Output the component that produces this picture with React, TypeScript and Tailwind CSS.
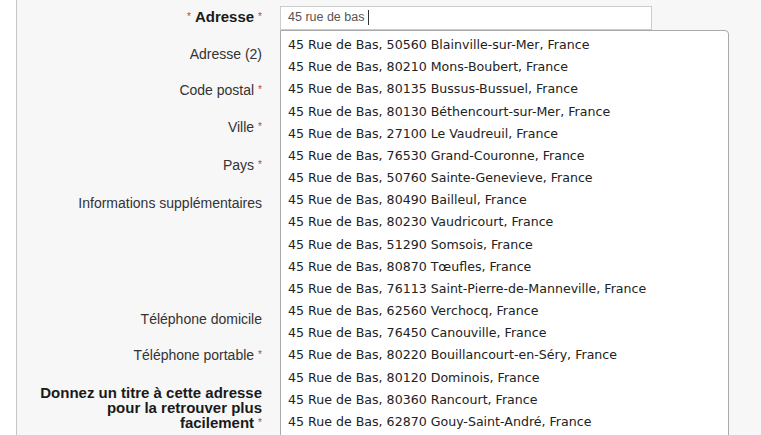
const suggestions = [
  '45 Rue de Bas, 50560 Blainville-sur-Mer, France',
  '45 Rue de Bas, 80210 Mons-Boubert, France',
  '45 Rue de Bas, 80135 Bussus-Bussuel, France',
  '45 Rue de Bas, 80130 Béthencourt-sur-Mer, France',
  '45 Rue de Bas, 27100 Le Vaudreuil, France',
  '45 Rue de Bas, 76530 Grand-Couronne, France',
  '45 Rue de Bas, 50760 Sainte-Genevieve, France',
  '45 Rue de Bas, 80490 Bailleul, France',
  '45 Rue de Bas, 80230 Vaudricourt, France',
  '45 Rue de Bas, 51290 Somsois, France',
  '45 Rue de Bas, 80870 Tœufles, France',
  '45 Rue de Bas, 76113 Saint-Pierre-de-Manneville, France',
  '45 Rue de Bas, 62560 Verchocq, France',
  '45 Rue de Bas, 76450 Canouville, France',
  '45 Rue de Bas, 80220 Bouillancourt-en-Séry, France',
  '45 Rue de Bas, 80120 Dominois, France',
  '45 Rue de Bas, 80360 Rancourt, France',
  '45 Rue de Bas, 62870 Gouy-Saint-André, France',
];

function Star() {
  return <span className="text-[10px] font-normal text-[#b5483f] align-[2px] ml-[4px]">*</span>;
}

type RowProps = {
  label: React.ReactNode;
  required?: boolean;
  h: string;
  top?: boolean;
  pad?: string;
  children?: React.ReactNode;
};

function Row({ label, required, h, top, pad, children }: RowProps) {
  return (
    <div className={`flex ${h} ${top ? 'items-start' : 'items-center'}`}>
      <div className={`w-[230px] ml-[15px] text-right ${pad ?? ''}`}>
        {label}
        {required && <Star />}
      </div>
      <div className="ml-[18px] flex-1">{children}</div>
    </div>
  );
}

export default function App() {
  return (
    <div className="w-[761px] h-[435px] overflow-hidden bg-white flex font-['Liberation_Sans',Arial,sans-serif] text-[14px] text-[#333]">
      <div className="w-[16px] shrink-0 bg-white" />
      <div className="relative flex-1 border-l border-[#c6c6c6] bg-[#f7f7f7]">
        <Row
          h="h-[35px]"
          label={
            <span className="font-bold text-[15px] text-[#1a1a1a]">
              <span className="text-[10px] text-[#b5483f] font-normal align-[2px] mr-[4px]">*</span>
              Adresse
            </span>
          }
          required
        >
          <div className="w-[372px] h-[24px] bg-white border border-[#cccccc] flex items-center pl-[7px] text-[12.5px] text-[#555]">
            <span>45 rue de bas</span>
            <span className="ml-[4px] w-px h-[15px] bg-[#333]" />
          </div>
        </Row>
        <Row h="h-[38px]" label="Adresse (2)" />
        <Row h="h-[35px]" label="Code postal" required />
        <Row h="h-[39px]" label="Ville" required />
        <Row h="h-[37px]" label="Pays" required />
        <Row h="h-[116px]" top pad="pt-[9px]" label="Informations supplémentaires" />
        <Row h="h-[38px]" label="Téléphone domicile" />
        <Row h="h-[34px]" label="Téléphone portable" required />
        <Row
          h="h-[63px]"
          top
          pad="pt-[13px] leading-[15px] font-bold text-[15px] text-[#1a1a1a]"
          label="Donnez un titre à cette adresse pour la retrouver plus facilement"
          required
        />

        {/* autocomplete dropdown */}
        <div className="absolute left-[263px] top-[30px] w-[449px] h-[420px] bg-white border border-[#a9a9a9] rounded-tr-[4px] pt-[3px] pl-[7px] font-['DejaVu_Sans',Tahoma,sans-serif] text-[12.6px] text-[#222]">
          {suggestions.map((s) => (
            <div key={s} className="h-[22.18px] leading-[22px] whitespace-nowrap">
              {s}
            </div>
          ))}
        </div>
      </div>
    </div>
  );
}
